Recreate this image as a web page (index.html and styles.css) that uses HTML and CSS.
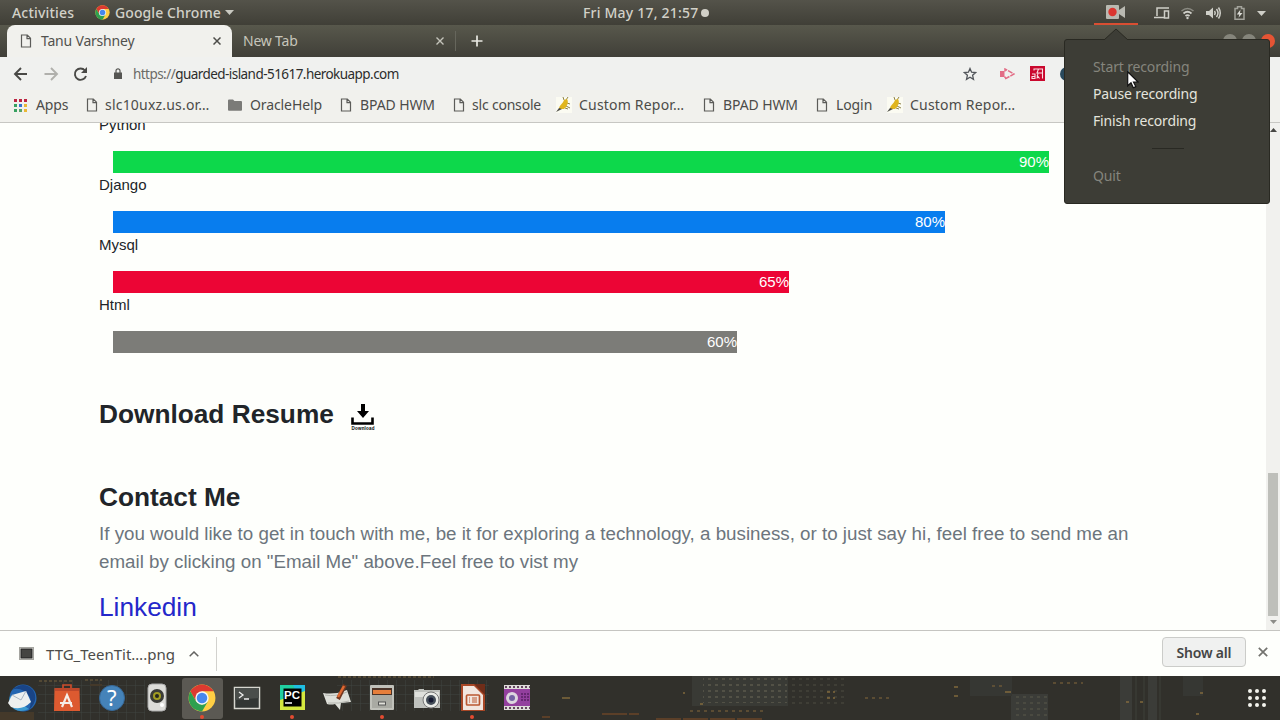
FILE: index.html
```html
<!DOCTYPE html>
<html>
<head>
    <meta charset="utf-8">
    <title>Tanu Varshney</title>
    <link rel="stylesheet" href="styles.css">
</head>
<body>
    <svg class="defs" width="0" height="0">
        <defs>
            <symbol id="page" viewBox="0 0 12 14">
                <path d="M1.5 1h5.8l3.2 3.2V13h-9zM7 1v3.6h3.5" fill="none" stroke="#5c5c59" stroke-width="1.2"/>
            </symbol>
            <symbol id="chrome" viewBox="0 0 48 48">
                <circle cx="24" cy="24" r="23" fill="#ffce44"/>
                <path d="M4.1 12.5A23 23 0 0 1 43.9 12.5H24L14 29.8z" fill="#dc3a30"/>
                <path d="M4.1 12.5A23 23 0 0 0 24 47L34 29.8 24 35.500 14 29.800z" fill="#2ea04f"/>
                <circle cx="24" cy="24" r="11.5" fill="#f4f6f2"/>
                <circle cx="24" cy="24" r="9" fill="#4688ec"/>
            </symbol>
            <symbol id="bug" viewBox="0 0 16 16">
                <path d="M0 0h16v16H0z" fill="#fbfbf2"/>
                <path d="M8 3L7 0M10 3l2-3M11 6l3 1M10 9l4 2M9 11l3 1" stroke="#8d8147" fill="none"/>
                <path d="M3 12C3 8 7 7 8 3l3-1c2 3 0 8-3 10z" fill="#e1b51d"/>
                <path d="M0 15l3-4 3 1-4 2z" fill="#4c4c46"/>
            </symbol>
        </defs>
    </svg>

    <header class="topbar">
        <span class="activities">Activities</span>
        <svg class="app-icon" width="15" height="15"><use href="#chrome"/></svg>
        <span class="app-name">Google Chrome</span>
        <svg class="arrow" width="9" height="5" viewBox="0 0 9 5"><path d="M0 0h9L4.500 5z" fill="#c9c9c1"/></svg>
        <span class="clock">Fri May 17, 21:57</span>
        <span class="dot"></span>
        <div class="recorder">
            <svg width="20" height="14" viewBox="0 0 20 14">
                <rect width="13" height="14" rx="1" fill="#b9b9b1"/>
                <path d="M13 5l6-4v12l-6-4z" fill="#b9b9b1"/>
                <circle cx="6.500" cy="7" r="4.200" fill="#db3630"/>
            </svg>
        </div>
        <svg class="tray" width="114" height="18" viewBox="0 0 114 18" fill="none" stroke="#cfcfc8" stroke-width="1.500">
            <path d="M3 12V4h12M0 13.500h10" />
            <rect x="10.500" y="7" width="4" height="7"/>
            <g transform="translate(27 3)">
                <path d="M.5 4Q6.500-1 12.500 4" stroke="#8b8b83"/>
                <path d="M2.500 6.500Q6.500 3 10.500 6.500M4.500 9Q6.500 7.200 8.500 9" stroke-width="1.800"/>
                <circle cx="6.500" cy="11" r="1.200" fill="#cfcfc8" stroke="none"/>
            </g>
            <g transform="translate(52 3)">
                <path d="M0 4h3l4-3.500v11L3 8H0z" fill="#cfcfc8" stroke="none"/>
                <path d="M8.500 4q1.500 2 0 4M10.500 2q3 4 0 8M12.500.5q3.500 5.500 0 11"/>
            </g>
            <g transform="translate(80 2)">
                <path d="M1 2.500h2.500V.8h4v1.700H10v10.700H1z" stroke="#a3a39b"/>
                <path d="M6.500 3.500L2.800 8.500h2.500l-.8 3.200L8.500 7H6z" fill="#dbdbd5" stroke="none"/>
            </g>
            <path d="M103 7h9l-4.500 5z" fill="#cfcfc8" stroke="none"/>
        </svg>
    </header>

    <div class="tabstrip">
        <div class="tab active">
            <svg class="tab-icon" width="12" height="14"><use href="#page"/></svg>
            <span class="tab-title">Tanu Varshney</span>
            <svg class="close" width="8" height="8" viewBox="0 0 8 8"><path d="M.5.5l7 7m0-7l-7 7" stroke="#4d4d49" stroke-width="1.500"/></svg>
        </div>
        <div class="tab">
            <span class="tab-title">New Tab</span>
            <svg class="close" width="8" height="8" viewBox="0 0 8 8"><path d="M.5.5l7 7m0-7l-7 7" stroke="#c4c4bb" stroke-width="1.400"/></svg>
        </div>
        <svg class="plus" width="12" height="12" viewBox="0 0 12 12"><path d="M6 .5v11M.5 6h11" stroke="#e9e9e2" stroke-width="1.700"/></svg>
        <div class="window-buttons"><i></i><i></i><i class="quit"></i></div>
    </div>

    <div class="toolbar">
        <svg class="nav" width="80" height="16" viewBox="0 0 80 16" fill="none" stroke-width="1.900">
            <path d="M14 8H2M8 2L2 8l6 6" stroke="#494946"/>
            <path d="M31.500 8h12M38 2l6 6-6 6" stroke="#b0b0ac"/>
            <path d="M72 4.500A5.700 5.700 0 1 0 73 10" stroke="#494946"/>
            <path d="M74 1v6h-6z" fill="#494946"/>
        </svg>
        <svg class="lock" width="8" height="11" viewBox="0 0 8 11"><path d="M0 4.500h8V11H0z" fill="#565653"/><path d="M2 5V2.800a2 2 0 0 1 4 0V5" fill="none" stroke="#565653" stroke-width="1.200"/></svg>
        <span class="url"><span>https://</span>guarded-island-51617.herokuapp.com</span>
        <svg class="star" width="14" height="14" viewBox="0 0 14 14"><path d="M7 1.500l1.600 3.700 4 .4-3 2.700.9 4L7 10.200l-3.500 2.100.9-4-3-2.700 4-.4z" fill="none" stroke="#52565b" stroke-width="1.300"/></svg>
        <svg class="ext-arrow" width="15" height="12" viewBox="0 0 15 12"><path d="M0 3h4.500v6H0z" fill="#e26d86"/><path d="M5 3.500V1l9 5-9 5V8.500" fill="none" stroke="#e26d86" stroke-width="1.500" stroke-dasharray="5 1"/></svg>
        <svg class="ext-red" width="15" height="15" viewBox="0 0 15 15"><path d="M0 0h15v15H0z" fill="#ca082e"/><path d="M4 4.500V3h8.500v9.500M12 7H7l1.500-4M8 7l-1 5.500M2 8h3v4.500H2v-2h3M7 9l2.500 3.500" fill="none" stroke="#fadfe4" stroke-width="1.100"/></svg>
        <span class="ext-blue"></span>
    </div>

    <nav class="bookmarks">
        <a class="bm apps">
            <svg width="13" height="13" viewBox="0 0 13 13">
                <path d="M0 0h3v3H0zM5 0h3v3H5zM10 0h3v3h-3z" fill="#bd2541"/>
                <path d="M0 5h3v3H0zM0 10h3v3H0z" fill="#37a160"/>
                <path d="M5 5h3v3H5z" fill="#3473d0"/><path d="M5 10h3v3H5z" fill="#57a46a"/>
                <path d="M10 5h3v3h-3zM10 10h3v3h-3z" fill="#e9b834"/>
            </svg>
            <span>Apps</span>
        </a>
        <a class="bm slc"><svg width="12" height="14"><use href="#page"/></svg><span>slc10uxz.us.or…</span></a>
        <a class="bm"><svg width="14" height="12" viewBox="0 0 14 12"><path d="M0 1.500Q0 .5 1 .5h4l1.500 1.500H13q1 0 1 1V11q0 .8-1 .8H1Q0 11.800 0 11z" fill="#7b7b78"/></svg><span>OracleHelp</span></a>
        <a class="bm"><svg width="12" height="14"><use href="#page"/></svg><span>BPAD HWM</span></a>
        <a class="bm console"><svg width="12" height="14"><use href="#page"/></svg><span>slc console</span></a>
        <a class="bm custom"><svg width="16" height="16"><use href="#bug"/></svg><span>Custom Repor…</span></a>
        <a class="bm"><svg width="12" height="14"><use href="#page"/></svg><span>BPAD HWM</span></a>
        <a class="bm"><svg width="12" height="14"><use href="#page"/></svg><span>Login</span></a>
        <a class="bm custom"><svg width="16" height="16"><use href="#bug"/></svg><span>Custom Repor…</span></a>
    </nav>

    <div class="viewport">
        <main class="content">
            <div class="skills">
                <p>Python</p>
                <div class="skill python">90%</div>
                <p>Django</p>
                <div class="skill django">80%</div>
                <p>Mysql</p>
                <div class="skill mysql">65%</div>
                <p>Html</p>
                <div class="skill html">60%</div>
            </div>
            <h3 class="resume">Download Resume
                <svg width="26" height="30" viewBox="0 0 26 30">
                    <path d="M11 1h4v7h4l-6 7-6-7h4z"/>
                    <path d="M2.500 14.500v6h20v-6" fill="none" stroke="#000" stroke-width="2.600"/>
                    <text x="1.500" y="27" font-size="4.500" font-weight="bold" textLength="23">Download</text>
                </svg>
            </h3>
            <h3 class="contact">Contact Me</h3>
            <p class="lead">If you would like to get in touch with me, be it for exploring a technology, a business, or to just say hi, feel free to send me an email by clicking on "Email Me" above.Feel free to vist my</p>
            <a class="linkedin">Linkedin</a>
        </main>
        <div class="scrollbar">
            <svg width="7" height="4" viewBox="0 0 7 4"><path d="M0 4h7L3.500 0z" fill="#474744"/></svg>
            <div class="thumb"></div>
            <svg width="7" height="4" viewBox="0 0 7 4"><path d="M0 0h7L3.500 4z" fill="#8c8c88"/></svg>
        </div>
    </div>

    <div class="shelf">
        <div class="download">
            <svg width="15" height="13" viewBox="0 0 15 13"><rect x=".5" y=".5" width="14" height="12" fill="#e8e8e3" stroke="#a5a5a0"/><rect x="2" y="2" width="11" height="9" fill="#454542" stroke="#222"/></svg>
            <span>TTG_TeenTit….png</span>
            <svg class="chevron" width="10" height="6" viewBox="0 0 10 6"><path d="M.7 5.300L5 1l4.300 4.300" fill="none" stroke="#646461" stroke-width="1.500"/></svg>
        </div>
        <button class="show-all">Show all</button>
        <svg class="shelf-close" width="10" height="10" viewBox="0 0 10 10"><path d="M.8.8l8.400 8.400m0-8.400L.8 9.200" stroke="#73736f" stroke-width="1.700"/></svg>
    </div>

    <footer class="dock">
        <svg class="city" width="1280" height="44" viewBox="0 0 1280 44">
            <defs>
                <pattern id="windows" width="7" height="6" patternUnits="userSpaceOnUse"><path d="M1 2h3v2H1z" fill="#58574a"/></pattern>
                <pattern id="panes" width="9" height="9" patternUnits="userSpaceOnUse"><path d="M0 0h9M0 0v9" stroke="#46504b" fill="none"/></pattern>
            </defs>
            <path d="M0 0h1280v44H0z" fill="#31302b"/>
            <path d="M38 4h107v40H38zM337 4h152v31H337z" fill="url(#panes)" opacity=".65"/>
            <path d="M692 0h96v30h-96z" fill="#393a35"/>
            <path d="M703 0h84v27h-84z" fill="url(#windows)" opacity=".8"/>
            <path d="M790 0h58v28h-58z" fill="url(#windows)" opacity=".35"/>
            <path d="M1011 18h37v26h-37zM1120 0h12v44h-12zM1148 0h9v44h-9z" fill="#3b3c38"/>
            <path d="M1014 20h33v22h-33z" fill="url(#windows)" opacity=".5"/>
            <path d="M970 0h42v20h-42zM1183 0h20v20h-20z" fill="#363733"/>
            <path d="M1136 0v44M1144 0v44M1160 0v44" stroke="#3f413b"/>
            <path d="M0 36h34v8H0zM90 8h12v2H90z" fill="#44392a"/>
            <g opacity=".6">
                <path d="M39 5h35M85 4h17M338 1h96" stroke="#69583a" stroke-dasharray="3 2" stroke-width="2"/>
                <path d="M690 35h74M865 22h24M992 10h12M1053 7h30" stroke="#776039" stroke-dasharray="3 4" stroke-width="2"/>
                <path d="M656 43h106M602 38h37M542 41h8" stroke="#784a27" stroke-width="2" stroke-dasharray="25 2"/>
                <path d="M827 16h3M833 16h2M827 22h3M833 22h2M954 11h4M954 20h4M683 17h2M700 28h3M1126 26h3M1140 26h3M1200 17h3M1005 16h6M562 22h8M1196 38h3" stroke="#94763f" stroke-width="2"/>
            </g>
        </svg>
        <div class="launcher">
            <div class="app">
                <svg viewBox="0 0 30 30">
                    <circle cx="16" cy="15" r="13.500" fill="#2466b1"/>
                    <path d="M5 7Q17-3 26 7Q32 17 22 27Q27 14 17 8Q10 4 5 7z" fill="#194486"/>
                    <path d="M3 13Q0 20 7 26Q13 30 22 26" fill="#3d9bd0"/>
                    <path d="M5 12l14-4 5 11q-9 9-20 5l-3-4z" fill="#edf0ef"/>
                    <path d="M5 12l9 5 5-9" fill="none" stroke="#a9b6c3"/>
                </svg>
            </div>
            <div class="app">
                <svg viewBox="0 0 30 30">
                    <path d="M11 6V2h8v4" fill="none" stroke="#cc4c2b" stroke-width="1.700"/>
                    <path d="M2.500 5h25L28 28H2z" fill="#dd5a30"/><path d="M3 5h24v3H3z" fill="#bd482b"/>
                    <path d="M10 24l5-12 5 12M12 20h8M8 20h3" fill="none" stroke="#f5ede7" stroke-width="2.200"/>
                </svg>
            </div>
            <div class="app">
                <svg viewBox="0 0 30 30">
                    <circle cx="15" cy="15" r="12.500" fill="#4583b9" stroke="#36699a"/>
                    <text class="question" x="10" y="23">?</text>
                </svg>
            </div>
            <div class="app">
                <svg viewBox="0 0 30 30">
                    <rect x="6" y="1" width="18" height="27" rx="4" fill="#dcdcd8" stroke="#aaa"/>
                    <circle cx="15" cy="13" r="7" fill="#3b3c38"/><circle cx="15" cy="13" r="4" fill="#a29d22"/><circle cx="15" cy="13" r="2" fill="#26261d"/>
                    <circle cx="20" cy="22" r="2" fill="#fff"/>
                </svg>
            </div>
            <div class="app open active-app"><svg viewBox="0 0 30 30"><use href="#chrome" x="1" y="1" width="28" height="28"/></svg></div>
            <div class="app">
                <svg viewBox="0 0 30 30">
                    <rect x="2.500" y="4.500" width="25" height="21" fill="#323634" stroke="#d6d6cf" stroke-width="1.500"/>
                    <path d="M3 5h24v10L3 17z" fill="#4a4e4b"/>
                    <path d="M7 9l4 3-4 3M12 16h5" fill="none" stroke="#eee" stroke-width="1.300"/>
                </svg>
            </div>
            <div class="app open">
                <svg viewBox="0 0 30 30">
                    <path d="M3 2h25v25H3z" fill="#20cfa0"/><path d="M16 2h12v25z" fill="#20bee2"/><path d="M28 8v19H3V17z" fill="#d5e83f"/>
                    <path d="M6.500 5.500h18v18h-18z"/>
                    <text class="pc" x="7" y="16">PC</text><path d="M8 20h7" stroke="#fff" stroke-width="1.500"/>
                </svg>
            </div>
            <div class="app">
                <svg viewBox="0 0 30 30">
                    <path d="M1 10l4 11q4 1 8 0l5 6 1-7 10-1-4-12q-12 5-24 3z" fill="#dedfd9"/>
                    <path d="M3 12q11 2 22-3M6 20q11 1 21-2" fill="none" stroke="#b4b5af"/>
                    <path d="M23 2L16 16" stroke="#723720" stroke-width="4"/><path d="M22 3l-6 11" stroke="#df6931" stroke-width="2.500"/>
                </svg>
            </div>
            <div class="app open">
                <svg viewBox="0 0 30 30">
                    <rect x="3" y="2" width="24" height="25" rx="1" fill="#c0c1ba"/><path d="M5 5h20v7H5z" fill="#4b3429"/><path d="M6 7h18v4H6z" fill="#e67e3b"/>
                    <path d="M5 12h20v13H5z" fill="#a9aaa3"/><rect x="11.500" y="19" width="7" height="3" fill="#e2e2db" stroke="#555"/>
                </svg>
            </div>
            <div class="app">
                <svg viewBox="0 0 30 30">
                    <path d="M2 7h4l1-1h5v1h16v18H2z" fill="#bfc1bd"/><path d="M3 9h24v5H3z" fill="#dfe0dc"/>
                    <circle cx="19" cy="17" r="8" fill="#eaebe7" stroke="#777"/><circle cx="19" cy="17" r="5" fill="#454e59"/><circle cx="19" cy="17" r="2.500" fill="#151931"/>
                </svg>
            </div>
            <div class="app open">
                <svg viewBox="0 0 30 30">
                    <path d="M4 1h24v27H4z" fill="#a84726"/><path d="M6 3h11l9 9v15H6z" fill="#f2e6df"/><path d="M17 1h11v11z" fill="#6f2d19"/>
                    <rect x="9.500" y="12" width="13" height="10" rx="1" fill="none" stroke="#ba5832" stroke-width="1.700"/>
                    <path d="M12 15h1m2 0h5M12 17h1m2 0h5M12 19h1m2 0h5" stroke="#ba5832"/>
                </svg>
            </div>
            <div class="app">
                <svg viewBox="0 0 30 30">
                    <path d="M2 2h26v25H2z" fill="#dedcda"/><path d="M2 6h26v17H2z" fill="#933f9e"/>
                    <path d="M3 4h25M3 25h25" stroke="#64465f" stroke-width="2" stroke-dasharray="2 2"/>
                    <path d="M19 11h8M19 14h8M19 17h8" stroke="#592166" stroke-width="1.500" stroke-dasharray="2 1"/>
                    <circle cx="10" cy="15" r="6" fill="#ddd5df"/><circle cx="10" cy="15" r="3" fill="#7462a4"/>
                </svg>
            </div>
        </div>
        <div class="grid-button"><i></i><i></i><i></i><i></i><i></i><i></i><i></i><i></i><i></i></div>
    </footer>

    <div class="menu">
        <svg class="pointer" width="24" height="12" viewBox="0 0 24 12"><path d="M0 12L12 1l12 11" fill="#3d3d36" stroke="#292922"/></svg>
        <span class="disabled">Start recording</span>
        <span>Pause recording</span>
        <span>Finish recording</span>
        <hr>
        <span class="disabled">Quit</span>
    </div>
    <svg class="cursor" width="12" height="18" viewBox="0 0 12 18"><path d="M.7.8v14l3.300-3 2.300 5 2.500-1.200-2.300-4.600h4.600z" fill="#fff" stroke="#111" stroke-width="1.200"/></svg>
</body>
</html>
```

FILE: styles.css
```css
* {
    box-sizing: border-box;
}

body {
    margin: 0;
    width: 1280px;
    height: 720px;
    overflow: hidden;
    background-color: #fefffc;
    font-family: "Noto Sans", sans-serif;
    font-size: 14px;
    color: #4c4c49;
    white-space: nowrap;
}

svg {
    display: block;
    flex-shrink: 0;
}

.defs {
    position: absolute;
}

/* desktop top bar */
.topbar {
    display: flex;
    align-items: center;
    height: 25px;
    padding-left: 12px;
    background: linear-gradient(#54534a, #403f37);
    color: #d2d1c8;
    font-size: 14px;
    font-weight: 500;
    line-height: 19px;
}

.topbar > span {
    padding-bottom: 1px;
}

.activities {
    width: 83px;
    letter-spacing: 0.2px;
}

.app-icon {
    margin-right: 5px;
}

.app-name {
    width: 110px;
    letter-spacing: 0.1px;
}

.clock {
    width: 118px;
    margin-left: 349px;
    letter-spacing: 0.2px;
}

.dot {
    width: 8px;
    height: 8px;
    border-radius: 50%;
    background-color: #d2d1c8;
}

.recorder {
    display: flex;
    justify-content: center;
    align-items: center;
    width: 44px;
    height: 25px;
    margin-left: 385px;
    border-bottom: 2px solid #d94e32;
}

.tray {
    margin-left: 16px;
}

/* browser */
.tabstrip {
    display: flex;
    align-items: center;
    height: 32px;
    padding-left: 7px;
    background: linear-gradient(#58584c, #403f38);
}

.tab {
    display: flex;
    align-items: center;
    width: 224px;
    height: 20px;
    padding: 0 11px;
    border-right: 1px solid #66665c;
    color: #c6c5bb;
    letter-spacing: -0.2px;
}

.tab-title {
    padding-bottom: 2px;
}

.tab.active {
    width: 225px;
    height: 32px;
    padding: 0 11px 0 13px;
    border: 0;
    border-radius: 8px 8px 0 0;
    background-color: #f1f1ed;
    color: #52524e;
}

.tab-icon {
    margin-right: 9px;
}

.close {
    margin-left: auto;
}

.plus {
    margin-left: 15px;
}

.window-buttons {
    display: flex;
    gap: 5px;
    margin-left: auto;
    padding-right: 5px;
}

.window-buttons i {
    width: 14px;
    height: 14px;
    border-radius: 50%;
    background-color: #85857b;
}

.window-buttons .quit {
    background-color: #e65434;
}

.toolbar {
    display: flex;
    align-items: center;
    height: 33px;
    padding-left: 13px;
    background-color: #f0f1ef;
}

.lock {
    margin-left: 21px;
}

.url {
    width: 830px;
    margin-left: 11px;
    font-size: 13.5px;
    letter-spacing: -0.55px;
    color: #2c2d2c;
}

.url span {
    color: #6b6b68;
}

.ext-arrow {
    margin-left: 23px;
}

.ext-red {
    margin-left: 15px;
}

.ext-blue {
    width: 14px;
    height: 14px;
    margin-left: 15px;
    border-radius: 50%;
    background-color: #29495d;
}

.bookmarks {
    display: grid;
    grid-template-columns: 72px 142px 112px 113px 103px 147px 113px 71px 130px;
    height: 33px;
    padding-left: 14px;
    background-color: #f1f1ed;
    border-bottom: 1px solid #c7c7c3;
}

.bm {
    display: flex;
    align-items: center;
    gap: 8px;
    height: 30px;
    letter-spacing: -0.1px;
}

.bm span {
    padding-bottom: 2px;
}

.bm.apps {
    gap: 9px;
}

.bm.console {
    gap: 7px;
    letter-spacing: -0.2px;
}

.bm.custom,
.bm.slc {
    gap: 7px;
    letter-spacing: 0.2px;
}

/* web page */
.viewport {
    display: flex;
    justify-content: space-between;
    height: 507px;
    overflow: hidden;
}

.content {
    width: 1060px;
    margin-left: 99px;
    font-family: "Liberation Sans", sans-serif;
    color: #212529;
}

.skills {
    margin-top: -11px;
    font-size: 15px;
    line-height: 25px;
}

.skills p {
    height: 39px;
    margin: 0;
}

.skill {
    height: 22px;
    margin: 0 0 -1px 14px;
    line-height: 22px;
    text-align: right;
    color: #fff;
}

.python {
    width: 936px;
    background-color: #0dd84b;
}

.django {
    width: 832px;
    background-color: #087dee;
}

.mysql {
    width: 676px;
    background-color: #ec0535;
}

.html {
    width: 624px;
    background-color: #7c7c78;
}

h3 {
    margin: 0;
    font-size: 26.25px;
    line-height: 32px;
}

.resume {
    display: flex;
    align-items: center;
    gap: 16px;
    height: 32px;
    margin-top: 46px;
}

.resume svg {
    margin-top: 8px;
}

.contact {
    margin-top: 51px;
}

.lead {
    margin: 7px 0 0;
    width: 1040px;
    font-size: 18.75px;
    line-height: 28px;
    color: #6c757d;
    white-space: normal;
}

.linkedin {
    display: block;
    margin-top: 15px;
    font-size: 26.25px;
    line-height: 32px;
    color: #2427ca;
}

.scrollbar {
    display: flex;
    flex-direction: column;
    align-items: center;
    width: 14px;
    padding: 5px 0 6px;
    background-color: #f1f1ee;
}

.thumb {
    width: 10px;
    height: 143px;
    margin: auto 0 4px;
    background-color: #bebfba;
}

/* download shelf */
.shelf {
    display: flex;
    align-items: center;
    height: 46px;
    border-top: 1px solid #c5c5c1;
}

.download {
    display: flex;
    align-items: center;
    width: 217px;
    height: 34px;
    padding-left: 19px;
    border-right: 1px solid #d2d2ce;
    font-size: 15px;
}

.download span {
    width: 143px;
    margin-left: 12px;
}

.show-all {
    width: 84px;
    height: 30px;
    margin: -3px 0 0 945px;
    padding: 0;
    border: 1px solid #cbccc9;
    border-radius: 4px;
    background-color: #f0f1f0;
    font-family: inherit;
    font-size: 14px;
    font-weight: 600;
    letter-spacing: -0.2px;
    color: #454545;
}

.shelf-close {
    margin: -3px 0 0 12px;
}

/* dock */
.dock {
    position: relative;
    display: flex;
    justify-content: space-between;
    height: 44px;
}

.city {
    position: absolute;
    left: 0;
    top: 0;
}

.launcher {
    position: relative;
    display: flex;
    gap: 4px;
    padding: 2px 0 0 2px;
}

.app {
    position: relative;
    width: 41px;
    height: 41px;
    padding: 5px;
    border-radius: 3px;
}

.app svg {
    width: 30px;
    height: 30px;
}

.active-app {
    background-color: #5b5953;
}

.open::after {
    content: "";
    position: absolute;
    left: 18px;
    bottom: 0;
    width: 4px;
    height: 4px;
    border-radius: 50%;
    background-color: #e34b31;
}

.question {
    font-size: 22px;
    fill: #fff;
}

.pc {
    font-family: "Liberation Sans", sans-serif;
    font-size: 11.5px;
    font-weight: bold;
    fill: #fff;
}

.grid-button {
    position: relative;
    display: grid;
    grid-template-columns: 4px 4px 4px;
    grid-auto-rows: 4px;
    gap: 3px;
    padding: 13px 14px 0 0;
}

.grid-button i {
    border-radius: 50%;
    background-color: #f4f4ee;
}

/* recording menu */
.menu {
    position: absolute;
    left: 1064px;
    top: 39px;
    display: flex;
    flex-direction: column;
    width: 206px;
    height: 165px;
    padding: 13px 28px;
    border: 1px solid #292922;
    border-radius: 3px;
    background-color: #3d3d36;
    color: #e4e4dd;
    line-height: 27px;
    letter-spacing: -0.15px;
}

.menu .disabled {
    color: #85857d;
}

.menu hr {
    width: 32px;
    margin: 14px auto 13px 59px;
    border: 0;
    border-top: 1px solid #292923;
}

.pointer {
    position: absolute;
    left: 39px;
    top: -12px;
}

.cursor {
    position: absolute;
    left: 1127px;
    top: 71px;
}
```
